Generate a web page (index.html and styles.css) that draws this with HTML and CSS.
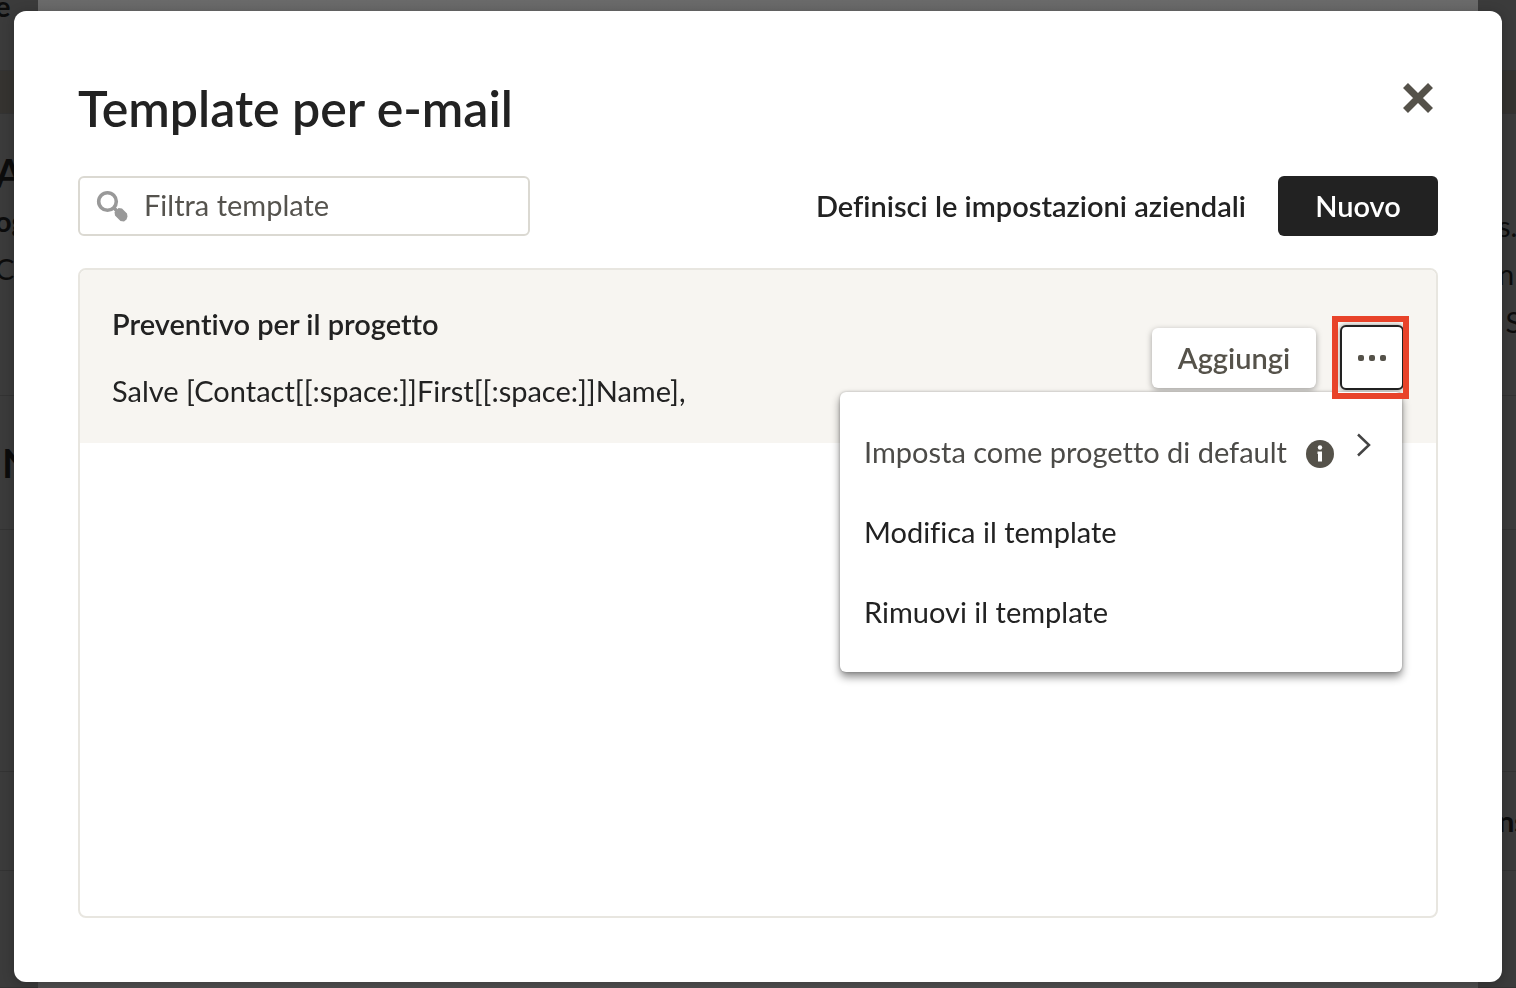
FILE: index.html
```
<!DOCTYPE html>
<html lang="it">
<head>
	<meta charset="utf-8">
	<title>Template per e-mail</title>
	<link rel="stylesheet" href="styles.css">
</head>

<body>

<div class="page" aria-hidden="true">
	<div class="side side_left">
		<div class="row row_top"><b>e</b></div>
		<div class="row row_band"></div>
		<div class="row row_intro">
			<b class="big">A</b>
			<b>og</b>
			<span>C</span>
		</div>
		<div class="row row_name"><b class="big">N</b></div>
		<div class="row row_body"></div>
		<div class="row row_terms"></div>
		<div class="row row_rest"></div>
	</div>
	<div class="middle"></div>
	<div class="side side_right">
		<div class="row row_top"></div>
		<div class="row row_band"></div>
		<div class="row row_intro">
			<span>s.</span>
			<span>n</span>
			<span>&nbsp;S</span>
		</div>
		<div class="row row_name"></div>
		<div class="row row_body"></div>
		<div class="row row_terms"><b>ns</b></div>
		<div class="row row_rest"></div>
	</div>
</div>

<div class="overlay">
<div class="dialog" role="dialog" aria-labelledby="dialog_title">
	<div class="dialog_head">
		<h1 id="dialog_title">Template per e-mail</h1>
		<button class="btn_close" type="button" aria-label="Chiudi">
			<svg width="32" height="32" viewBox="0 0 32 32"><path d="M3.5 3.5l25 25M28.500 3.500l-25 25" stroke="#55524a" stroke-width="7"/></svg>
		</button>
	</div>

	<div class="toolbar">
		<label class="search">
			<svg width="32" height="32" viewBox="0 0 32 32" fill="none" stroke="#999" aria-hidden="true">
				<circle cx="11.500" cy="11.500" r="8.800" stroke-width="3.600"/>
				<path d="M17.500 17.500l5 5" stroke-width="3.500"/>
				<path d="M18.500 22l2-1.500 2-2.500 3.500.5 5 5 .500 3-1 3-2.500 2-3.500-.5-5.500-5.500z" fill="#999" stroke="none"/>
			</svg>
			<input type="text" placeholder="Filtra template" aria-label="Filtra template">
		</label>
		<a class="link_company" href="#">Definisci le impostazioni aziendali</a>
		<button class="btn_new" type="button">Nuovo</button>
	</div>

	<div class="list">
		<div class="item">
			<div class="item_text">
				<h2>Preventivo per il progetto</h2>
				<p>Salve [Contact[[:space:]]First[[:space:]]Name],</p>
			</div>
			<div class="item_actions">
				<button class="btn_add" type="button">Aggiungi</button>
				<div class="more">
					<button class="btn_more" type="button" aria-label="Altre azioni" aria-expanded="true">
						<svg width="28" height="6" viewBox="0 0 28 6" fill="#55524a"><rect width="6" height="6" rx="2"/><rect x="11" width="6" height="6" rx="2"/><rect x="22" width="6" height="6" rx="2"/></svg>
					</button>
					<div class="menu">
						<button class="menu_item menu_default" type="button">
							<span>Imposta come progetto di default</span>
							<svg class="ico_info" width="28" height="28" viewBox="0 0 28 28"><circle cx="14" cy="14" r="14" fill="#55524a"/><circle cx="14" cy="7.500" r="2.200" fill="#fff"/><path d="M11.500 11.500h4.500v10h-4v-7.500h-.5z" fill="#fff"/></svg>
							<svg class="ico_next" width="16" height="24" viewBox="0 0 16 24" fill="none" stroke="#444" stroke-width="2.500"><path d="M2 1.500l11 10.500-11 10.500"/></svg>
						</button>
						<button class="menu_item" type="button">Modifica il template</button>
						<button class="menu_item" type="button">Rimuovi il template</button>
					</div>
					<div class="highlight"></div>
				</div>
			</div>
		</div>
	</div>
</div>
</div>

</body>
</html>
```
FILE: styles.css
```
* {
	box-sizing: border-box;
}

body {
	margin: 0;
	background-color: #3b3b3b;
	color: #222;
	font-family: Lato, "Liberation Sans", sans-serif;
	font-size: 29px;
	font-variant-ligatures: none;
	line-height: 40px;
}

button, input {
	font: inherit;
	font-variant-ligatures: none;
	color: inherit;
}

button {
	padding: 0;
	border: none;
	background: none;
	cursor: pointer;
}

svg {
	display: block;
	flex: none;
}

/* page behind the dialog */
.page {
	display: flex;
	height: 100vh;
	overflow: hidden;
	color: #0c0c0c;
}

.side {
	display: flex;
	flex-direction: column;
	width: 38px;
}

.side_left {
	text-indent: -5px;
}

.side_right .row {
	padding-left: 20px;
}

.middle {
	flex: 1;
	background: linear-gradient(#6a6a6a, #505050);
}

.row {
	flex: none;
	border-bottom: 1px solid #333;
	white-space: nowrap;
}

.row b, .row span {
	display: block;
	height: 48px;
	line-height: 48px;
}

.row .big {
	font-size: 40px;
}

.row_top {
	height: 71px;
}
.row_top b {
	margin-top: -18px;
}
.row_band {
	height: 43px;
	background-color: #353330;
}
.row_intro {
	height: 282px;
	padding-top: 35px;
}
.side_right .row_intro {
	padding-top: 88px;
}
.row_name {
	height: 134px;
	padding-top: 43px;
	text-indent: 2px;
}
.row_body {
	height: 242px;
}
.row_terms {
	height: 99px;
	padding-top: 25px;
}
.row_rest {
	flex: 1;
}

.overlay {
	position: fixed;
	inset: 0;
	display: flex;
	padding: 11px 14px 6px;
}

.dialog {
	display: flex;
	flex: 1;
	flex-direction: column;
	padding: 64px;
	border-radius: 12px;
	background-color: #fff;
	box-shadow: 0 2px 12px rgba(0, 0, 0, .25);
}

.dialog_head {
	display: flex;
	justify-content: space-between;
	align-items: flex-start;
	margin-bottom: 34px;
}

.dialog_head h1 {
	margin: 0;
	font-size: 50px;
	font-weight: 600;
	line-height: 67px;
}

.btn_close {
	padding: 7px 4px;
}

.toolbar {
	display: flex;
	align-items: center;
	gap: 32px;
	margin-bottom: 32px;
}

.search {
	display: flex;
	align-items: center;
	gap: 16px;
	width: 452px;
	height: 60px;
	margin-right: auto;
	padding: 0 16px;
	border: 2px solid #dbd9d2;
	border-radius: 6px;
}

.search input {
	flex: 1;
	min-width: 0;
	padding: 0 0 2px;
	border: none;
	outline: none;
	background: none;
}

.search input::placeholder {
	color: #55534e;
	opacity: 1;
}

.link_company {
	color: #222;
	font-weight: 600;
	text-decoration: none;
}

.btn_new {
	width: 160px;
	height: 60px;
	border-radius: 6px;
	background-color: #222;
	color: #fff;
	font-weight: 600;
}

.list {
	flex: 1;
	border: 2px solid #e8e6e0;
	border-radius: 8px;
}

.item {
	display: flex;
	justify-content: space-between;
	padding: 34px 32px 32px;
	border-radius: 6px 6px 0 0;
	background-color: #f7f5f1;
}

.item h2 {
	margin: 0 0 27px;
	font-size: 29px;
	font-weight: 600;
	line-height: 40px;
}

.item p {
	margin: 0;
}

.item_actions {
	display: flex;
	align-items: center;
	align-self: flex-start;
	gap: 24px;
	padding-top: 21px;
}

.btn_add {
	width: 164px;
	height: 60px;
	border-radius: 6px;
	background-color: #fff;
	box-shadow: 0 2px 6px rgba(0, 0, 0, .35);
	color: #55524a;
	font-weight: 600;
}

.more {
	position: relative;
}

.btn_more {
	display: flex;
	align-items: center;
	justify-content: center;
	width: 64px;
	height: 65px;
	border: 2px solid #222;
	border-radius: 6px;
	background-color: #fff;
	box-shadow: 0 0 4px rgba(0, 0, 0, .4);
}

.menu {
	position: absolute;
	top: 67px;
	right: 2px;
	width: 562px;
	padding: 20px 0;
	border-radius: 6px;
	background-color: #fff;
	box-shadow: 0 5px 8px rgba(0, 0, 0, .45), 0 0 3px rgba(0, 0, 0, .25);
}

.menu_item {
	display: flex;
	align-items: center;
	width: 100%;
	height: 80px;
	padding: 0 24px;
	text-align: left;
}

.menu_default {
	color: #4c4b48;
}

.ico_info {
	margin: 4px 0 0 auto;
}

.ico_next {
	margin: 0 6px 14px 22px;
}

/* red frame round the open menu button */
.highlight {
	position: absolute;
	inset: -9px -5px -9px -8px;
	border: 6px solid #e8432a;
	pointer-events: none;
}
```
